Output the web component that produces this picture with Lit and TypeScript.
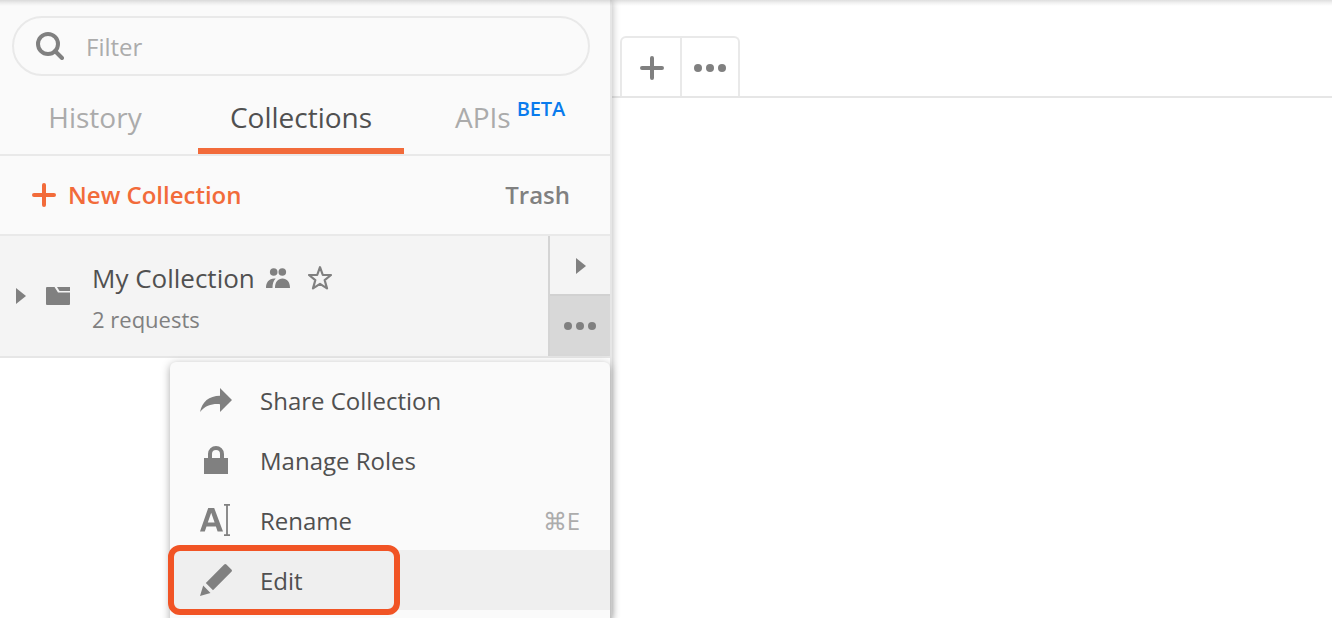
import { LitElement, html, css, svg } from "lit";
import { customElement } from "lit/decorators.js";

const dots = html`<svg width="32" height="8" viewBox="0 0 32 8" fill="#808080">
  <circle cx="4" cy="4" r="4" /><circle cx="16" cy="4" r="4" /><circle cx="28" cy="4" r="4" />
</svg>`;

const plus = html`<svg width="24" height="24" viewBox="0 0 24 24" fill="none" stroke="currentColor" stroke-width="4" stroke-linecap="round">
  <path d="M12 2V22M2 12H22" />
</svg>`;

const triangle = html`<svg width="10" height="16" viewBox="0 0 10 16" fill="#808080"><path d="M0 0L10 8L0 16Z" /></svg>`;

const menuItems = [
  {
    label: "Share Collection",
    icon: svg`<path d="M20 4L32 16L20 28V20.2C12 19.6 5.500 21.500 0 28C2 18 9 11.800 20 11.800Z" />`,
  },
  {
    label: "Manage Roles",
    icon: svg`<path d="M4 14H8V10A8 8 0 0 1 24 10V14H28V30H4ZM12 14H20V10A4 4 0 0 0 12 10Z" fill-rule="evenodd" />`,
  },
  {
    label: "Rename",
    shortcut: "⌘E",
    icon: svg`<path d="M8.200 4H14.200L23 27.500H17.600L15.900 22.500H6.500L4.800 27.500H0ZM11.200 8.800L7.800 18.500H14.600Z" fill-rule="evenodd" />
      <path d="M24 0H30V1.700H27.900V30.300H30V32H24V30.300H26.100V1.700H24Z" />`,
  },
  {
    label: "Edit",
    active: true,
    icon: svg`<path d="M24.200 .600Q25.300-.400 26.400 .600L31.400 5.600Q32.500 6.700 31.400 7.800L13 26.200L5.800 19ZM3.200 21.600L10.500 29L0 32Z" />`,
  },
];

@customElement("app-root")
export class AppRoot extends LitElement {
  static styles = css`
    :host {
      display: block;
      position: relative;
      width: 1332px;
      height: 618px;
      overflow: hidden;
      background: #fff;
      color: #505050;
      font: 24px/32px "Open Sans", "Noto Sans", sans-serif;
      -webkit-font-smoothing: antialiased;
    }
    * { box-sizing: border-box; }
    svg { display: block; flex: none; }
    .top-shadow {
      position: absolute;
      z-index: 5;
      inset: 0 0 auto 0;
      height: 6px;
      background: linear-gradient(rgba(0, 0, 0, 0.13), rgba(0, 0, 0, 0.05) 50%, transparent);
    }
    .layout { display: flex; height: 618px; }
    .sidebar {
      position: relative;
      z-index: 1;
      flex: none;
      width: 612px;
      border-right: 2px solid #e6e6e6;
      box-shadow: 0 0 8px rgba(0, 0, 0, 0.3);
      background: #fff;
    }
    .head { background: #fafafa; padding-top: 16px; }
    .filter {
      display: flex;
      align-items: center;
      gap: 22px;
      margin: 0 20px 0 12px;
      height: 60px;
      padding: 0 22px;
      border: 2px solid #e9e9e9;
      border-radius: 30px;
      color: #acacac;
    }
    .filter span { padding-top: 2px; }
    .tabs {
      display: grid;
      grid-template-columns: 198px 206px 206px;
      height: 80px;
      border-bottom: 2px solid #e9e9e9;
      font-size: 28px;
      color: #ababab;
    }
    .tab { display: flex; justify-content: center; padding-top: 25px; }
    .tab.first { padding-right: 8px; }
    .tab.on { color: #505050; border-bottom: 6px solid #f26b3a; }
    .tab.apis { justify-content: flex-start; padding-left: 51px; }
    .beta { margin: -8px 0 0 6px; font-size: 20px; font-weight: 600; letter-spacing: -0.15px; color: #097bed; }
    .tools {
      display: flex;
      align-items: center;
      height: 80px;
      padding: 0 40px 0 32px;
      border-bottom: 2px solid #e9e9e9;
      font-weight: 600;
      color: #808080;
    }
    .new { display: flex; flex: 1; align-items: center; gap: 12px; color: #f26b3a; }
    .collection {
      display: flex;
      height: 122px;
      border-bottom: 2px solid #e6e6e6;
      background: #f4f4f4;
    }
    .row { display: flex; flex: 1; align-items: center; padding-left: 16px; }
    .folder { margin: 0 22px 0 20px; }
    .info { padding-top: 4px; }
    .name { display: flex; align-items: center; font-size: 26px; height: 42px; }
    .people { margin: 0 18px 0 11px; }
    .count { font-size: 22px; line-height: 40px; color: #808080; }
    .actions { display: grid; grid-template-rows: 58px 62px; width: 62px; border-left: 2px solid #d4d4d4; }
    .action { display: flex; align-items: center; justify-content: center; }
    .run { padding: 2px 0 0 2px; }
    .more { border-top: 2px solid #d1d1d1; background: #d8d8d8; }
    .main { flex: 1; }
    .tabbar { display: flex; height: 98px; padding: 36px 0 0 8px; border-bottom: 2px solid #e6e6e6; }
    .buttons {
      display: flex;
      width: 120px;
      border: 2px solid #e9e9e9;
      border-bottom: 0;
      border-radius: 6px 6px 0 0;
      color: #808080;
    }
    .button { display: flex; align-items: center; justify-content: center; width: 56px; padding-top: 2px; }
    .button.add { width: 60px; padding-left: 2px; border-right: 2px solid #e9e9e9; }
    .menu {
      position: absolute;
      z-index: 2;
      left: 170px;
      top: 362px;
      width: 440px;
      height: 280px;
      padding-top: 8px;
      border-radius: 6px;
      background: #fafafa;
      box-shadow: 0 2px 8px rgba(0, 0, 0, 0.34);
    }
    .item { display: flex; align-items: center; gap: 28px; height: 60px; padding: 0 30px; }
    .item.active { background: #efefef; }
    .item svg { fill: #808080; }
    .label { flex: 1; padding-top: 2px; }
    .key { color: #acacac; padding-top: 2px; }
    .callout {
      position: absolute;
      z-index: 3;
      left: 168px;
      top: 545px;
      width: 232px;
      height: 70px;
      border: 6px solid #f15425;
      border-radius: 12px;
    }
  `;

  render() {
    return html`
      <div class="layout">
        <aside class="sidebar">
          <div class="head">
            <div class="filter">
              <svg width="28" height="28" viewBox="0 0 28 28" fill="none" stroke="#808080" stroke-width="4">
                <circle cx="12" cy="12" r="10" />
                <path d="M19 19L26 26" stroke-linecap="round" />
              </svg>
              <span>Filter</span>
            </div>
            <nav class="tabs">
              <div class="tab first">History</div>
              <div class="tab on">Collections</div>
              <div class="tab apis">APIs<span class="beta">BETA</span></div>
            </nav>
            <div class="tools">
              <div class="new">${plus}<span>New Collection</span></div>
              <span>Trash</span>
            </div>
          </div>
          <div class="collection">
            <div class="row">
              ${triangle}
              <svg class="folder" width="24" height="18" viewBox="0 0 24 18" fill="#808080">
                <path d="M1 0H8.500L12 5.500H24V17Q24 18 23 18H1Q0 18 0 17V1Q0 0 1 0ZM11 0H24V4H13.500Z" />
              </svg>
              <div class="info">
                <div class="name">
                  <span>My Collection</span>
                  <svg class="people" width="24" height="20" viewBox="0 0 24 20" fill="#808080">
                    <circle cx="7.700" cy="4" r="3.800" /><circle cx="16.300" cy="4" r="3.800" />
                    <path d="M9 20C9 14 12 10.500 16.500 10.500S24 14 24 20ZM0 20C0 14.500 2.500 10.700 8.500 10.500H9.700C7.200 13 6.500 16 6.500 20Z" />
                  </svg>
                  <svg width="24" height="24" viewBox="0 0 24 24" fill="none" stroke="#808080" stroke-width="2.2" stroke-linejoin="round">
                    <path d="M12 1.200L14.800 9H23L16.700 14.200L19 22.400L12 17.900L5 22.400L7.300 14.200L1 9H9.200Z" />
                  </svg>
                </div>
                <div class="count">2 requests</div>
              </div>
            </div>
            <div class="actions">
              <div class="action run">${triangle}</div>
              <div class="action more">${dots}</div>
            </div>
          </div>
        </aside>
        <main class="main">
          <div class="tabbar">
            <div class="buttons">
              <div class="button add">${plus}</div>
              <div class="button">${dots}</div>
            </div>
          </div>
        </main>
      </div>
      <div class="menu">
        ${menuItems.map(
          (m) => html`<div class="item ${m.active ? "active" : ""}">
            <svg width="32" height="32" viewBox="0 0 32 32">${m.icon}</svg>
            <span class="label">${m.label}</span>
            ${m.shortcut ? html`<span class="key">${m.shortcut}</span>` : ""}
          </div>`
        )}
      </div>
      <div class="callout"></div>
      <div class="top-shadow"></div>
    `;
  }
}
